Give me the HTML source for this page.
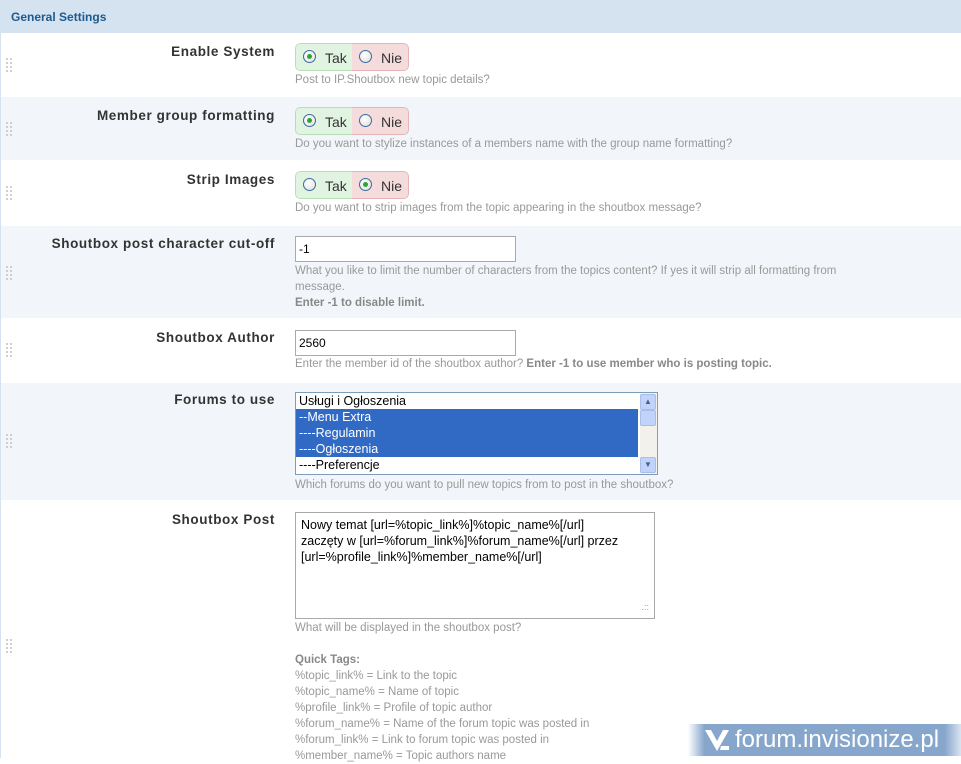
<!DOCTYPE html>
<html><head><meta charset="utf-8"><style>
*{margin:0;padding:0;box-sizing:border-box}
body{width:961px;height:758px;overflow:hidden;background:#fff;font-family:"Liberation Sans",Arial,sans-serif;position:relative}
.abs{position:absolute}
.hdr{left:0;top:0;width:961px;height:33px;background:#d5e3f0;color:#1d5a8e;font-weight:bold;font-size:12px;padding:10px 0 0 11px}
.row{left:1px;width:960px}
.lb{position:absolute;right:686px;font-weight:bold;font-size:13.5px;color:#333;letter-spacing:.6px;white-space:nowrap}
.ds{position:absolute;left:294px;font-size:11.5px;color:#999;line-height:16px}
.ds b{color:#888}
.grip{position:absolute;left:5px;width:8px;height:16px;background-image:linear-gradient(#d0d0d0,#d0d0d0),linear-gradient(#d0d0d0,#d0d0d0);}
.grip{background:none}
.grip i{position:absolute;width:2px;height:2px;background:#cfcfcf}
.tog{position:absolute;left:294px;width:114px;height:28px;border-radius:5px;overflow:hidden;font-size:14px;color:#333}
.tog .y{position:absolute;left:0;top:0;width:57px;height:28px;background:#e1f3e1;border:1px solid #b6dfb6;border-right:none;border-radius:5px 0 0 5px}
.tog .n{position:absolute;left:57px;top:0;width:57px;height:28px;background:#f5dcdc;border:1px solid #e6b4b4;border-left:none;border-radius:0 5px 5px 0}
.rad{position:absolute;top:6px;left:7px;width:13px;height:13px;border-radius:50%;border:1px solid #3d6aa0;background:radial-gradient(circle at 40% 35%,#fff,#ddd)}
.rad.on::after{content:"";position:absolute;left:3px;top:3px;width:5px;height:5px;border-radius:50%;background:#2fa52f}
.tt{position:absolute;top:6px;left:29px}
.inp{position:absolute;left:294px;width:221px;height:26px;border:1px solid #aaa;background:#fff;font-size:12px;padding:5px 3px;color:#000}
</style></head><body>
<div class="abs" style="left:0;top:0;width:1px;height:758px;background:#d5e3f0"></div>
<div class="abs hdr">General Settings</div>

<div class="abs row" style="top:33px;height:63px;background:#fff">
<div class="lb" style="top:11px">Enable System</div>
<div class="grip" style="top:25px"><i style="left:0;top:0"></i><i style="left:4px;top:0"></i><i style="left:0;top:4px"></i><i style="left:4px;top:4px"></i><i style="left:0;top:8px"></i><i style="left:4px;top:8px"></i><i style="left:0;top:12px"></i><i style="left:4px;top:12px"></i></div>
<div class="tog" style="top:10px"><div class="y"><div class="rad on"></div><div class="tt">Tak</div></div><div class="n"><div class="rad"></div><div class="tt">Nie</div></div></div>
<div class="ds" style="top:39px">Post to IP.Shoutbox new topic details?</div>
</div>

<div class="abs row" style="top:97px;height:63px;background:#f2f6fa">
<div class="lb" style="top:11px">Member group formatting</div>
<div class="grip" style="top:25px"><i style="left:0;top:0"></i><i style="left:4px;top:0"></i><i style="left:0;top:4px"></i><i style="left:4px;top:4px"></i><i style="left:0;top:8px"></i><i style="left:4px;top:8px"></i><i style="left:0;top:12px"></i><i style="left:4px;top:12px"></i></div>
<div class="tog" style="top:10px"><div class="y"><div class="rad on"></div><div class="tt">Tak</div></div><div class="n"><div class="rad"></div><div class="tt">Nie</div></div></div>
<div class="ds" style="top:39px">Do you want to stylize instances of a members name with the group name formatting?</div>
</div>

<div class="abs row" style="top:161px;height:63px;background:#fff">
<div class="lb" style="top:11px">Strip Images</div>
<div class="grip" style="top:25px"><i style="left:0;top:0"></i><i style="left:4px;top:0"></i><i style="left:0;top:4px"></i><i style="left:4px;top:4px"></i><i style="left:0;top:8px"></i><i style="left:4px;top:8px"></i><i style="left:0;top:12px"></i><i style="left:4px;top:12px"></i></div>
<div class="tog" style="top:10px"><div class="y"><div class="rad"></div><div class="tt">Tak</div></div><div class="n"><div class="rad on"></div><div class="tt">Nie</div></div></div>
<div class="ds" style="top:39px">Do you want to strip images from the topic appearing in the shoutbox message?</div>
</div>

<div class="abs row" style="top:226px;height:92px;background:#f2f6fa">
<div class="lb" style="top:10px">Shoutbox post character cut-off</div>
<div class="grip" style="top:40px"><i style="left:0;top:0"></i><i style="left:4px;top:0"></i><i style="left:0;top:4px"></i><i style="left:4px;top:4px"></i><i style="left:0;top:8px"></i><i style="left:4px;top:8px"></i><i style="left:0;top:12px"></i><i style="left:4px;top:12px"></i></div>
<div class="inp" style="top:10px">-1</div>
<div class="ds" style="top:37px;width:585px">What you like to limit the number of characters from the topics content? If yes it will strip all formatting from<br>message.<br><b>Enter -1 to disable limit.</b></div>
</div>

<div class="abs row" style="top:320px;height:61px;background:#fff">
<div class="lb" style="top:10px">Shoutbox Author</div>
<div class="grip" style="top:23px"><i style="left:0;top:0"></i><i style="left:4px;top:0"></i><i style="left:0;top:4px"></i><i style="left:4px;top:4px"></i><i style="left:0;top:8px"></i><i style="left:4px;top:8px"></i><i style="left:0;top:12px"></i><i style="left:4px;top:12px"></i></div>
<div class="inp" style="top:10px">2560</div>
<div class="ds" style="top:36px">Enter the member id of the shoutbox author? <b>Enter -1 to use member who is posting topic.</b></div>
</div>

<div class="abs row" style="top:383px;height:117px;background:#f2f6fa">
<div class="lb" style="top:9px">Forums to use</div>
<div class="grip" style="top:51px"><i style="left:0;top:0"></i><i style="left:4px;top:0"></i><i style="left:0;top:4px"></i><i style="left:4px;top:4px"></i><i style="left:0;top:8px"></i><i style="left:4px;top:8px"></i><i style="left:0;top:12px"></i><i style="left:4px;top:12px"></i></div>
<div class="abs" style="left:294px;top:9px;width:363px;height:83px;border:1px solid #7f9db9;background:#fff;font-size:12.5px;line-height:16px;color:#000">
<div style="padding-left:3px">Usługi i Ogłoszenia</div>
<div style="background:#316ac5;color:#fff;width:342px;padding-left:3px">--Menu Extra</div>
<div style="background:#316ac5;color:#fff;width:342px;padding-left:3px">----Regulamin</div>
<div style="background:#316ac5;color:#fff;width:342px;padding-left:3px">----Ogłoszenia</div>
<div style="padding-left:3px">----Preferencje</div>
<div class="abs" style="right:0;top:0;width:17px;height:81px;background:#f2f1ec"></div>
<div class="abs" style="right:1px;top:1px;width:16px;height:16px;background:#c1d3fb;border:1px solid #a9bde8;border-radius:2px;font-size:8px;color:#4d6185;text-align:center;line-height:14px">▲</div>
<div class="abs" style="right:1px;top:17px;width:16px;height:16px;background:#c1d3fb;border:1px solid #a9bde8;border-radius:2px"></div>
<div class="abs" style="right:1px;bottom:1px;width:16px;height:16px;background:#c1d3fb;border:1px solid #a9bde8;border-radius:2px;font-size:8px;color:#4d6185;text-align:center;line-height:14px">▼</div>
</div>
<div class="ds" style="top:94px">Which forums do you want to pull new topics from to post in the shoutbox?</div>
</div>

<div class="abs row" style="top:502px;height:256px;background:#fff">
<div class="lb" style="top:10px">Shoutbox Post</div>
<div class="grip" style="top:137px"><i style="left:0;top:0"></i><i style="left:4px;top:0"></i><i style="left:0;top:4px"></i><i style="left:4px;top:4px"></i><i style="left:0;top:8px"></i><i style="left:4px;top:8px"></i><i style="left:0;top:12px"></i><i style="left:4px;top:12px"></i></div>
<div class="abs" style="left:294px;top:10px;width:360px;height:107px;border:1px solid #aaa;font-size:12.5px;line-height:16px;padding:4px 5px;color:#000;white-space:nowrap">Nowy temat [url=%topic_link%]%topic_name%[/url]<br>zaczęty w [url=%forum_link%]%forum_name%[/url] przez<br>[url=%profile_link%]%member_name%[/url]<span class="abs" style="right:5px;bottom:3px;font-size:9px;color:#999">.::</span></div>
<div class="ds" style="top:118px">What will be displayed in the shoutbox post?<br><br><b>Quick Tags:</b><br>%topic_link% = Link to the topic<br>%topic_name% = Name of topic<br>%profile_link% = Profile of topic author<br>%forum_name% = Name of the forum topic was posted in<br>%forum_link% = Link to forum topic was posted in<br>%member_name% = Topic authors name</div>
</div>

<div class="abs" style="left:688px;top:724px;width:273px;height:32px;background:linear-gradient(90deg,rgba(130,165,205,0),#86a6cc 6%,#86a6cc 94%,rgba(130,165,205,0.3));"></div>
<svg class="abs" style="left:704px;top:729px" width="26" height="22" viewBox="0 0 26 22"><path d="M1 1h6l6 11 6-11h6L13 22z" fill="#fff"/><path d="M17 17h8v4h-9z" fill="#fff"/></svg>
<div class="abs" style="left:735px;top:724px;font-size:24px;color:#fff;line-height:32px">forum.invisionize.pl</div>
</body></html>
